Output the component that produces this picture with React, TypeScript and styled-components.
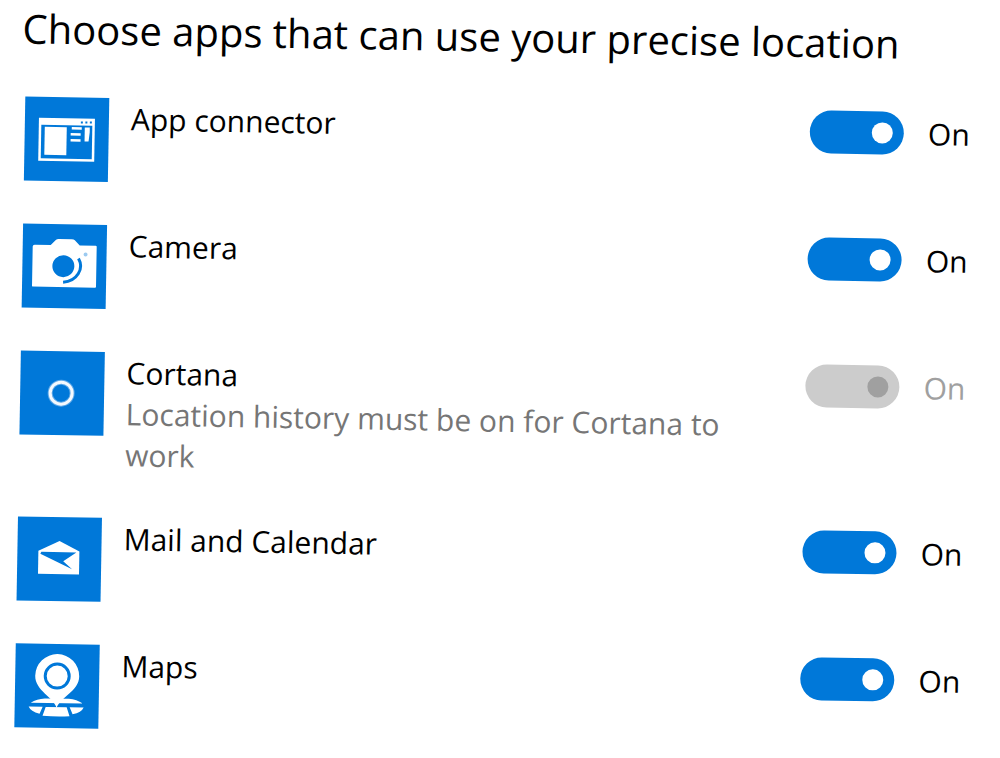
import React, { useId, useState } from "react";
import styled, { createGlobalStyle } from "styled-components";

const GlobalStyle = createGlobalStyle`
  * { box-sizing: border-box; }
  body {
    margin: 0;
    background: #fff;
    color: #000;
    font-family: "Open Sans", "Noto Sans", sans-serif;
    overflow: hidden;
  }
`;

const Page = styled.main`
  padding: 2px 28px 32px 27px;
  transform: rotate(1deg);
  transform-origin: 0 0;
`;

const Heading = styled.h1`
  margin: 0 0 42px -4px;
  font-size: 40px;
  line-height: 52px;
  font-weight: 400;
  white-space: nowrap;
`;

const AppList = styled.ul`
  list-style: none;
  margin: 0;
  padding: 0;
  display: flex;
  flex-direction: column;
  gap: 43px;
`;

const AppRow = styled.li`
  display: grid;
  grid-template-columns: 84px minmax(0, 1fr) auto;
  column-gap: 22px;
  align-items: start;
`;

const Tile = styled.svg`
  display: block;
  width: 84px;
  height: 84px;
  background: #0078d9;
`;

const AppText = styled.div`
  max-width: 624px;
  font-size: 30px;
  line-height: 41px;
`;

const AppName = styled.label`
  display: block;
`;

const Note = styled.p`
  margin: 0;
  color: #767676;
`;

const SwitchLabel = styled.label<{ $muted?: boolean }>`
  display: flex;
  align-items: center;
  gap: 24px;
  font-size: 30px;
  line-height: 42px;
  color: ${(p) => (p.$muted ? "#a0a0a0" : "#000")};
`;

const Switch = styled.input`
  appearance: none;
  display: flex;
  align-items: center;
  justify-content: flex-start;
  width: 94px;
  height: 43px;
  margin: 0;
  padding: 0 11px;
  border-radius: 22px;
  background: #999;

  &::before {
    content: "";
    width: 21px;
    height: 21px;
    border-radius: 50%;
    background: #fff;
  }
  &:checked {
    justify-content: flex-end;
    background: #0078d9;
  }
  &:disabled { background: #ccc; }
  &:disabled::before { background: #a0a0a0; }
`;

const ConnectorIcon = () => (
  <Tile viewBox="0 0 84 84" aria-hidden="true">
    <path d="M14 21h56v43H14z" fill="#fff" />
    <path d="M16.500 28h51v33.500h-51z" fill="#0078d9" />
    <path d="M20 30h22v28H20z" fill="#fff" />
    <path d="M47 31h10M46 37h10M46 43h10" stroke="#fff" strokeWidth="2.500" />
    <path d="M60 30h5v5l-1 9h-4z" fill="#fff" />
    <path d="M56 25h2M60.500 25h2M65 25h2" stroke="#0078d9" strokeWidth="2" />
  </Tile>
);

const CameraIcon = () => (
  <Tile viewBox="0 0 84 84" aria-hidden="true">
    <path d="M12 21h16l5-5q1-1 3-1h13q2 0 3 1l5 5h16q1 0 1 1v40q0 1-1 1H11q-1 0-1-1V23q0-2 2-2z" fill="#fff" />
    <circle cx="41" cy="42" r="11" fill="#0078d9" />
    <path d="M56 34C62 44 55 57 41 58" fill="none" stroke="#0078d9" strokeWidth="3" />
    <circle cx="63" cy="30" r="2" fill="#9ccaf0" />
  </Tile>
);

const CortanaIcon = () => (
  <Tile viewBox="0 0 84 84" aria-hidden="true">
    <circle cx="41" cy="42" r="11" fill="none" stroke="#5fa9e8" strokeWidth="5" />
    <circle cx="41" cy="42" r="11" fill="none" stroke="#f4f9fe" strokeWidth="3" />
  </Tile>
);

const MailIcon = () => (
  <Tile viewBox="0 0 84 84" aria-hidden="true">
    <path d="M21 34L42 24l20 10v23H21z" fill="#fff" />
    <path d="M24 35H59L46 44l9 8L23 37z" fill="#0078d9" />
  </Tile>
);

const MapsIcon = () => (
  <Tile viewBox="0 0 84 84" aria-hidden="true">
    <path d="M16 59Q22 55 30 54.500H54Q62 55 68 59z" fill="#fff" />
    <path d="M14 63H28L25 70Q16 68 14 63zM31 63H52L55 72Q42 73 28 72zM55 63H69Q67 68 58 70z" fill="#fff" />
    <path d="M42 64C39 53 20 47 20 32a22 22 0 0 1 44 0C64 47 45 53 42 64z" fill="#fff" />
    <circle cx="42" cy="32" r="12" fill="none" stroke="#0078d9" strokeWidth="3" />
  </Tile>
);

interface AppEntry {
  name: string;
  icon: React.ComponentType;
  note?: string;
  locked?: boolean;
}

const apps: AppEntry[] = [
  { name: "App connector", icon: ConnectorIcon },
  { name: "Camera", icon: CameraIcon },
  {
    name: "Cortana",
    icon: CortanaIcon,
    note: "Location history must be on for Cortana to work",
    locked: true,
  },
  { name: "Mail and Calendar", icon: MailIcon },
  { name: "Maps", icon: MapsIcon },
];

function AppSetting({ name, icon: Icon, note, locked }: AppEntry) {
  const id = useId();
  const [on, setOn] = useState(true);
  return (
    <AppRow>
      <Icon />
      <AppText>
        <AppName htmlFor={id}>{name}</AppName>
        {note && <Note>{note}</Note>}
      </AppText>
      <SwitchLabel $muted={locked}>
        <Switch
          id={id}
          type="checkbox"
          role="switch"
          checked={on}
          disabled={locked}
          onChange={(e) => setOn(e.target.checked)}
        />
        {on ? "On" : "Off"}
      </SwitchLabel>
    </AppRow>
  );
}

export default function App() {
  return (
    <>
      <GlobalStyle />
      <Page>
        <Heading>Choose apps that can use your precise location</Heading>
        <AppList>
          {apps.map((app) => (
            <AppSetting key={app.name} {...app} />
          ))}
        </AppList>
      </Page>
    </>
  );
}
